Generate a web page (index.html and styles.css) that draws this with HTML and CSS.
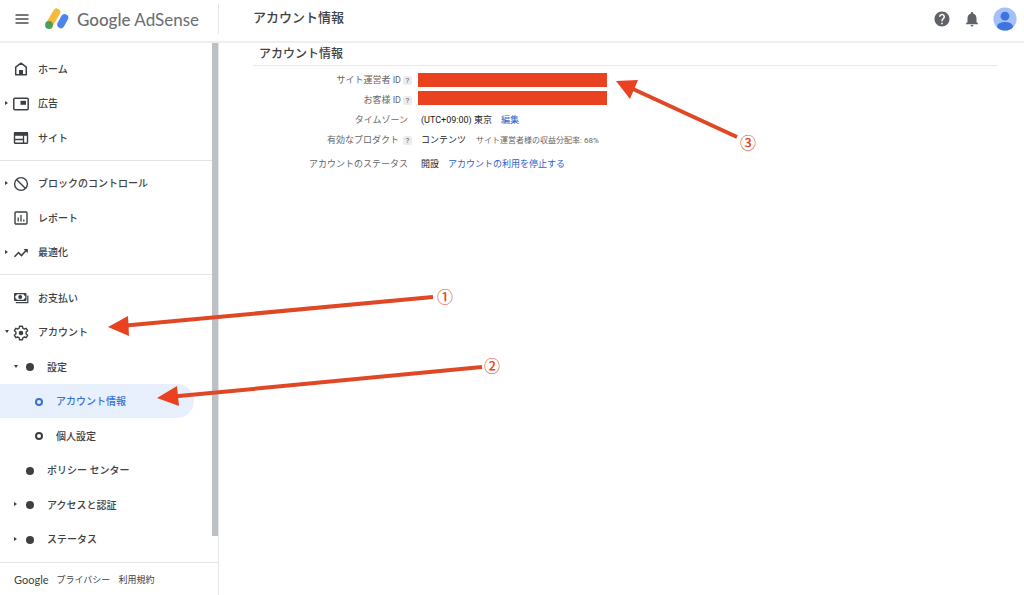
FILE: index.html
```html
<!DOCTYPE html>
<html lang="ja">
<head>
<meta charset="utf-8">
<meta name="viewport" content="width=device-width, initial-scale=1">
<title>アカウント情報 - Google AdSense</title>
<link rel="stylesheet" href="styles.css">
</head>
<body>
<div class="app">
  <header class="topbar">
    <div class="brand">
      <button class="icon-button" type="button" aria-label="メニュー">
        <svg width="14" height="12" viewBox="0 0 14 12"><path d="M0.500 2h13M0.500 6h13M0.500 10h13" stroke="#4a4d51" stroke-width="1.500"/></svg>
      </button>
      <a class="logo" href="#">
        <svg width="24" height="22" viewBox="0 0 24 22">
          <path d="M11.700 4.100 4.800 15.800" stroke="#f6bb3b" stroke-width="7.200" stroke-linecap="round"/>
          <circle cx="4" cy="17" r="3.900" fill="#4c9f59"/>
          <path d="M19.600 9.800 15.900 16.500" stroke="#4d84ee" stroke-width="7.400" stroke-linecap="round"/>
        </svg>
        <span class="logo-text"><span class="logo-google">Google</span> AdSense</span>
      </a>
    </div>
    <h1 class="page-title">アカウント情報</h1>
    <div class="actions">
      <button class="icon-button" type="button" aria-label="ヘルプ">
        <svg width="18" height="18" viewBox="0 0 24 24"><path fill="#5f6368" d="M12 2C6.480 2 2 6.480 2 12s4.480 10 10 10 10-4.480 10-10S17.520 2 12 2zm1 17h-2v-2h2v2zm2.070-7.750-.9.920C13.450 12.900 13 13.500 13 15h-2v-.5c0-1.100.450-2.100 1.170-2.830l1.240-1.260c.370-.360.590-.860.590-1.410 0-1.100-.9-2-2-2s-2 .9-2 2H8c0-2.210 1.790-4 4-4s4 1.790 4 4c0 .880-.360 1.680-.930 2.250z"/></svg>
      </button>
      <button class="icon-button" type="button" aria-label="通知">
        <svg width="18" height="18" viewBox="0 0 24 24"><path fill="#5f6368" d="M12 22c1.100 0 2-.9 2-2h-4c0 1.100.9 2 2 2zm6-6v-5c0-3.070-1.640-5.640-4.500-6.320V4c0-.83-.67-1.500-1.500-1.500s-1.500.67-1.500 1.500v.68C7.630 5.360 6 7.920 6 11v5l-2 2v1h16v-1l-2-2z"/></svg>
      </button>
      <button class="icon-button" type="button" aria-label="アカウント">
        <svg width="24" height="24" viewBox="0 0 24 24">
          <clipPath id="avatar"><circle cx="12" cy="12" r="11.600"/></clipPath>
          <circle cx="12" cy="12" r="11.600" fill="#a4c1fa"/>
          <g clip-path="url(#avatar)" fill="#3f74dc"><circle cx="12" cy="9.200" r="4.400"/><ellipse cx="12" cy="19.600" rx="8" ry="4.600"/></g>
        </svg>
      </button>
    </div>
  </header>

  <div class="body">
    <aside class="sidebar">
      <div class="nav-scroll">
        <nav class="nav" aria-label="メイン">
          <a class="item" href="#"><span class="caret"></span><span class="icon"><svg width="16" height="16" viewBox="0 0 16 16"><path d="M2.700 13.800V6.200L8 2.200l5.300 4v7.600z" fill="none" stroke="#3c4043" stroke-width="1.500" stroke-linejoin="round"/><path d="M6 9h4v5H6z" fill="#3c4043"/></svg></span>ホーム</a>
          <a class="item" href="#"><span class="caret right"></span><span class="icon"><svg width="16" height="14" viewBox="0 0 16 14"><rect x=".8" y="1.300" width="14.400" height="11.400" rx="1" fill="none" stroke="#3c4043" stroke-width="1.500"/><path d="M7.500 3.800h5.500v4H7.500z" fill="#3c4043"/></svg></span>広告</a>
          <a class="item" href="#"><span class="caret"></span><span class="icon"><svg width="16" height="14" viewBox="0 0 16 14"><rect x="1.500" y="1.700" width="13" height="10.600" rx=".8" fill="none" stroke="#3c4043" stroke-width="1.400"/><path d="M1 1h14v3.800H1z" fill="#3c4043"/><path d="M1.500 8.500h8.700M10.500 4v8" stroke="#3c4043" stroke-width="1.300"/></svg></span>サイト</a>
          <hr class="rule">
          <a class="item" href="#"><span class="caret right"></span><span class="icon"><svg width="16" height="16" viewBox="0 0 16 16"><circle cx="8" cy="8" r="6.400" fill="none" stroke="#3c4043" stroke-width="1.400"/><path d="m3.500 3.500 9 9" stroke="#3c4043" stroke-width="1.400"/></svg></span>ブロックのコントロール</a>
          <a class="item" href="#"><span class="caret"></span><span class="icon"><svg width="16" height="16" viewBox="0 0 16 16"><rect x="2" y="2" width="12" height="12" rx="1" fill="none" stroke="#3c4043" stroke-width="1.400"/><path d="M5.200 7.500v4M8 5v6.500M10.800 9.500v2" stroke="#3c4043" stroke-width="1.300"/></svg></span>レポート</a>
          <a class="item" href="#"><span class="caret right"></span><span class="icon"><svg width="16" height="16" viewBox="0 0 16 16"><path d="m1.500 11.800 4-4.200 3 3 4.800-5.300" fill="none" stroke="#3c4043" stroke-width="1.500"/><path d="M10.500 4h4.300v4.300z" fill="#3c4043"/></svg></span>最適化</a>
          <hr class="rule">
          <a class="item" href="#"><span class="caret"></span><span class="icon"><svg width="16" height="14" viewBox="0 0 16 14"><path fill="#3c4043" fill-rule="evenodd" d="M2 2h10.500a1 1 0 0 1 1 1v6a1 1 0 0 1-1 1H2a1 1 0 0 1-1-1V3a1 1 0 0 1 1-1zm1.800 1.200A1.500 1.500 0 0 1 2.300 4.700v2.600a1.500 1.500 0 0 1 1.500 1.500h6.900a1.500 1.500 0 0 1 1.500-1.500V4.700a1.500 1.500 0 0 1-1.500-1.500z"/><circle cx="7.200" cy="6" r="2" fill="#3c4043"/><path d="M2.800 11.700h12V4.500" fill="none" stroke="#3c4043" stroke-width="1.200"/></svg></span>お支払い</a>
          <a class="item" href="#"><span class="caret down"></span><span class="icon"><svg width="16" height="16" viewBox="0 0 16 16"><path d="m6.600 1.200h2.800l.4 1.900 1.500.9 1.900-.7 1.400 2.400-1.500 1.400v1.800l1.500 1.400-1.400 2.400-1.900-.7-1.500.9-.4 1.900H6.600l-.4-1.900-1.500-.9-1.900.7-1.400-2.400 1.500-1.400V7.100L1.400 5.700l1.400-2.400 1.900.7 1.500-.9z" fill="none" stroke="#3c4043" stroke-width="1.400" stroke-linejoin="round"/><circle cx="8" cy="8" r="2.300" fill="#3c4043"/></svg></span>アカウント</a>
          <a class="item level-1" href="#"><span class="caret down"></span><span class="icon"><span class="dot"></span></span>設定</a>
          <a class="item level-2 active" href="#" aria-current="page"><span class="caret"></span><span class="icon"><span class="ring"></span></span>アカウント情報</a>
          <a class="item level-2" href="#"><span class="caret"></span><span class="icon"><span class="ring"></span></span>個人設定</a>
          <a class="item level-1" href="#"><span class="caret"></span><span class="icon"><span class="dot"></span></span>ポリシー センター</a>
          <a class="item level-1" href="#"><span class="caret right"></span><span class="icon"><span class="dot"></span></span>アクセスと認証</a>
          <a class="item level-1" href="#"><span class="caret right"></span><span class="icon"><span class="dot"></span></span>ステータス</a>
        </nav>
        <div class="scrollbar"><div class="thumb"></div></div>
      </div>
      <footer class="legal">
        <a class="legal-google" href="#">Google</a>
        <a href="#">プライバシー</a>
        <a href="#">利用規約</a>
      </footer>
    </aside>

    <main class="content">
      <h2 class="section-title">アカウント情報</h2>
      <table class="details">
        <tr>
          <th scope="row">サイト運営者 ID<button class="help" type="button">?</button></th>
          <td class="masked-low"><div class="mask"></div></td>
        </tr>
        <tr>
          <th scope="row">お客様 ID<button class="help" type="button">?</button></th>
          <td class="masked-high"><div class="mask"></div></td>
        </tr>
        <tr>
          <th scope="row" class="plain">タイムゾーン</th>
          <td>(UTC+09:00) 東京<a class="link" href="#">編集</a></td>
        </tr>
        <tr>
          <th scope="row">有効なプロダクト<button class="help spaced" type="button">?</button></th>
          <td>コンテンツ<span class="note">サイト運営者様の収益分配率: 68%</span></td>
        </tr>
        <tr class="status">
          <th scope="row" class="plain">アカウントのステータス</th>
          <td>開設<a class="link" href="#">アカウントの利用を停止する</a></td>
        </tr>
      </table>
    </main>
  </div>

  <svg class="callouts" width="1024" height="595" viewBox="0 0 1024 595">
    <g class="arrow">
      <path d="M126 325.500 433 297"/><path class="head" d="M108 327 128 316 129 336z"/>
      <path d="M176 396.300 482 367"/><path class="head" d="M157 398 177 386 179 406z"/>
      <path d="M632 88.500 737 137"/><path class="head" d="M616 81 638 80 630 99z"/>
    </g>
    <text x="445" y="303">①</text>
    <text x="492" y="372">②</text>
    <text x="748" y="149">③</text>
  </svg>
</div>
</body>
</html>
```
FILE: styles.css
```css
* {
  box-sizing: border-box;
}

body {
  margin: 0;
  background: #fff;
  color: #3c4043;
  font-family: Roboto, "Noto Sans CJK JP", sans-serif;
  font-size: 10px;
}

a {
  color: inherit;
  text-decoration: none;
}

button {
  padding: 0;
  border: 0;
  background: none;
  font: inherit;
  color: inherit;
}

svg {
  display: block;
}

.app {
  position: relative;
  display: flex;
  flex-direction: column;
  min-height: 100vh;
}

/* Top bar */
.topbar {
  display: flex;
  align-items: flex-start;
  height: 43px;
  border-bottom: 2px solid #eeeff0;
}

.brand {
  display: flex;
  align-items: center;
  gap: 16px;
  width: 219px;
  height: 30px;
  margin-top: 4px;
  padding-left: 15px;
  border-right: 1px solid #e3e4e6;
}

.logo {
  display: flex;
  align-items: center;
  gap: 8px;
}

.logo-text {
  padding-top: 1px;
  font-family: Lato, sans-serif;
  font-size: 17px;
  line-height: 24px;
  color: #6a6d71;
  white-space: nowrap;
}

.logo-google {
  font-weight: 500;
}

.page-title {
  flex: 1;
  margin: 0;
  padding-left: 34px;
  font-size: 13px;
  font-weight: 500;
  line-height: 36px;
}

.actions {
  display: flex;
  align-items: center;
  gap: 12px;
  height: 38px;
  padding-right: 7px;
}

/* Sidebar */
.body {
  display: flex;
  flex: 1;
}

.sidebar {
  display: flex;
  flex-direction: column;
  width: 219px;
  border-right: 1px solid #e3e4e6;
}

.nav-scroll {
  display: flex;
  flex: 1;
}

.nav {
  display: flex;
  flex: 1;
  flex-direction: column;
  padding: 8px 0 6px;
}

.item {
  display: flex;
  flex: 1;
  align-items: center;
  min-height: 30px;
  font-weight: 500;
  white-space: nowrap;
}

.level-1 {
  padding-left: 9px;
}

.level-2 {
  padding-left: 18px;
}

.active {
  margin-right: 18px;
  border-radius: 0 18px 18px 0;
  background: #e8f0fe;
  color: #3871d6;
}

.caret {
  display: flex;
  justify-content: center;
  width: 13px;
}

.caret::before {
  border: 2px solid transparent;
}

.caret.right::before {
  content: "";
  border-width: 2px 0 2px 3px;
  border-left-color: #3c4043;
}

.caret.down::before {
  content: "";
  border-width: 3px 2px 0;
  border-top-color: #3c4043;
}

.icon {
  display: flex;
  justify-content: center;
  width: 16px;
  margin-right: 9px;
  padding-top: 2px;
}

.dot {
  width: 8px;
  height: 8px;
  border-radius: 50%;
  background: #3c4043;
}

.ring {
  width: 8px;
  height: 8px;
  border: 2px solid;
  border-radius: 50%;
}

.rule {
  width: 100%;
  height: 1px;
  margin: 5px 0;
  border: 0;
  background: #e3e4e6;
}

.scrollbar {
  width: 6px;
}

.thumb {
  height: 95%;
  background: #bdc1c6;
}

.legal {
  display: flex;
  align-items: center;
  gap: 8px;
  height: 33px;
  padding-left: 14px;
  border-top: 1px solid #e3e4e6;
  font-size: 9px;
}

.legal-google {
  font-family: Lato, sans-serif;
  font-size: 11px;
}

/* Account details */
.content {
  flex: 1;
  padding: 0 27px 0 34px;
}

.section-title {
  margin: 0 0 4px;
  padding-left: 6px;
  border-bottom: 1px solid #e8e9eb;
  font-size: 12px;
  font-weight: 500;
  line-height: 22px;
}

.details {
  border-spacing: 0;
  font-size: 9px;
  line-height: 12px;
}

.details th,
.details td {
  height: 20px;
  padding: 0;
  white-space: nowrap;
}

.details th {
  width: 159px;
  color: #666;
  font-weight: 400;
  text-align: right;
}

.details td {
  padding-left: 9px;
  color: #222;
}

.details .plain {
  padding-right: 4px;
}

.details .status th,
.details .status td {
  height: 28px;
}

.details .masked-low {
  padding: 0 0 3px 6px;
  vertical-align: bottom;
}

.details .masked-high {
  padding: 1px 0 0 6px;
  vertical-align: top;
}

.mask {
  width: 189px;
  height: 14px;
  background: #ea4220;
}

.help {
  width: 9px;
  height: 9px;
  margin-left: 2px;
  border-radius: 2px;
  background: #ececec;
  font-size: 8px;
  line-height: 9px;
}

.spaced {
  margin-left: 4px;
}

.link {
  margin-left: 9px;
  color: #2a62c9;
}

.note {
  margin-left: 10px;
  color: #666;
  font-size: 8px;
}

/* Numbered arrows over the page */
.callouts {
  position: absolute;
  top: 0;
  left: 0;
  pointer-events: none;
}

.arrow {
  fill: none;
  stroke: #e04725;
  stroke-width: 4;
}

.head {
  fill: #ea4220;
  stroke: none;
}

.callouts text {
  fill: #e04725;
  font-family: "Noto Sans CJK JP", sans-serif;
  font-size: 16px;
  font-weight: 500;
  text-anchor: middle;
}
```
